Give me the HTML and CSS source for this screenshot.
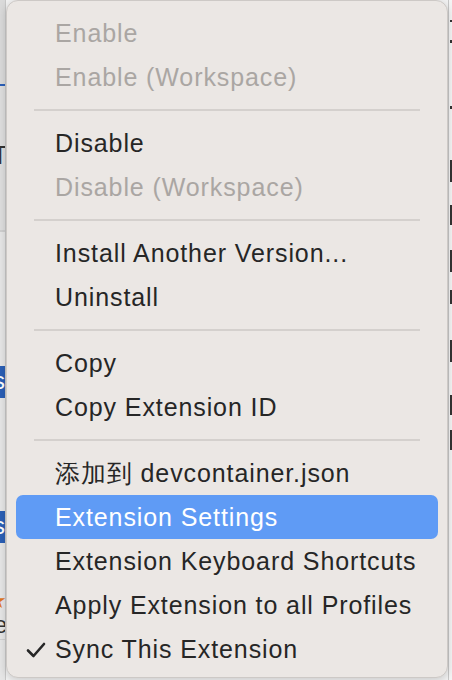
FILE: index.html
```html
<!DOCTYPE html>
<html>
<head>
<meta charset="utf-8">
<link rel="stylesheet" href="styles.css">
</head>
<body>
<div class="screen">
  <div class="strip-left">
    <div class="sl-top"></div>
    <div class="sl-blue-line"></div>
    <div class="sl-gap1"></div>
    <div class="sl-t">T</div>
    <div class="sl-gap2"></div>
    <div class="sl-rule"></div>
    <div class="sl-gap3"></div>
    <div class="sl-badge">s</div>
    <div class="sl-gap4"></div>
    <div class="sl-badge">s</div>
    <div class="sl-gap5"></div>
    <div class="sl-star">★</div>
    <div class="sl-e">e</div>
    <div class="sl-rest"></div>
  </div>
  <div class="menu">
    <div class="item disabled">Enable</div>
    <div class="item disabled">Enable (Workspace)</div>
    <div class="sep"></div>
    <div class="item">Disable</div>
    <div class="item disabled">Disable (Workspace)</div>
    <div class="sep"></div>
    <div class="item">Install Another Version...</div>
    <div class="item">Uninstall</div>
    <div class="sep"></div>
    <div class="item">Copy</div>
    <div class="item">Copy Extension ID</div>
    <div class="sep"></div>
    <div class="item">添加到 devcontainer.json</div>
    <div class="item active">Extension Settings</div>
    <div class="item">Extension Keyboard Shortcuts</div>
    <div class="item">Apply Extension to all Profiles</div>
    <div class="item checked"><svg class="check" width="20" height="16" viewBox="0 0 20 16"><path d="M2 8.5 L7.5 14 L18 2" fill="none" stroke="#262626" stroke-width="2.6" stroke-linecap="round" stroke-linejoin="round"/></svg>Sync This Extension</div>
  </div>
  <div class="strip-right">
    <div class="sr-mark m1"></div>
    <div class="sr-mark m2"></div>
    <div class="sr-mark m3"></div>
    <div class="sr-mark m4"></div>
    <div class="sr-mark m5"></div>
    <div class="sr-mark m6"></div>
    <div class="sr-mark m7"></div>
    <div class="sr-mark m8"></div>
    <div class="sr-mark m9"></div>
    <div class="sr-mark m10"></div>
  </div>
</div>
</body>
</html>
```

FILE: styles.css
```css
html, body {
  margin: 0;
  padding: 0;
  background: #f3f3f3;
}
.screen {
  display: flex;
  width: 452px;
  height: 680px;
  overflow: hidden;
}
.strip-left {
  width: 6px;
  flex: none;
  display: flex;
  flex-direction: column;
  background: #e6e6e6;
  border-right: 1px solid #c9c9c9;
  box-sizing: border-box;
  font-family: "Liberation Sans", sans-serif;
  overflow: hidden;
}
.sl-top { height: 84px; background: #dadada; flex: none; }
.sl-blue-line { height: 2px; background: #2a5fb8; flex: none; }
.sl-gap1 { height: 56px; background: #dedede; flex: none; }
.sl-t { height: 26px; font-size: 26px; line-height: 26px; color: #333; margin-left: -8px; background: #dedede; overflow: hidden; flex: none; }
.sl-gap2 { height: 62px; background: #dedede; flex: none; }
.sl-rule { height: 2px; background: #cfcfcf; flex: none; }
.sl-gap3 { height: 134px; flex: none; }
.sl-badge { height: 32px; background: #2b5fb5; color: #fff; font-size: 24px; line-height: 30px; margin-left: -7px; overflow: hidden; flex: none; }
.sl-gap4 { height: 113px; flex: none; }
.sl-gap5 { height: 46px; flex: none; }
.sl-star { height: 24px; color: #e0771f; font-size: 22px; line-height: 24px; margin-left: -13px; overflow: hidden; flex: none; }
.sl-e { height: 26px; color: #333; font-size: 24px; line-height: 24px; margin-left: -6px; overflow: hidden; flex: none; }
.sl-rest { flex: 1; border-top: 1px solid #d0d0d0; }

.menu {
  width: 442px;
  height: 678px;
  flex: none;
  box-sizing: border-box;
  background: #ebe7e4;
  border: 1px solid #cdc9c6;
  border-radius: 12px;
  padding: 10px 9px 0 9px;
  font-family: "Liberation Sans", sans-serif;
  font-size: 25px;
  letter-spacing: 0.9px;
  color: #262626;
  position: relative;
  z-index: 1;
  box-shadow: 0 2px 8px rgba(0,0,0,0.18);
}
.item {
  height: 44px;
  line-height: 44px;
  padding-left: 39px;
  border-radius: 7px;
  white-space: nowrap;
  position: relative;
}
.item.disabled { color: #aaa6a3; }
.item.active {
  background: #5f9bf5;
  color: #ffffff;
}
.check {
  position: absolute;
  left: 10px;
  top: 15px;
}
.sep {
  height: 22px;
  display: flex;
  align-items: center;
  padding: 0 18px;
}
.sep::before {
  content: "";
  flex: 1;
  height: 2px;
  background: #d4d0cd;
}
.strip-right {
  width: 4px;
  flex: none;
  background: #f5f5f5;
  position: relative;
  border-left: 1px solid #c8c8c8;
  box-sizing: border-box;
}
.sr-mark { position: absolute; left: 1px; width: 3px; background: #333; }
.m1 { top: 20px; height: 2px; }
.m2 { top: 40px; height: 3px; }
.m3 { top: 106px; height: 3px; }
.m4 { top: 160px; height: 22px; }
.m5 { top: 205px; height: 20px; }
.m6 { top: 250px; height: 22px; }
.m7 { top: 290px; height: 14px; }
.m8 { top: 340px; height: 22px; }
.m9 { top: 395px; height: 20px; }
.m10 { top: 430px; height: 20px; }
```
